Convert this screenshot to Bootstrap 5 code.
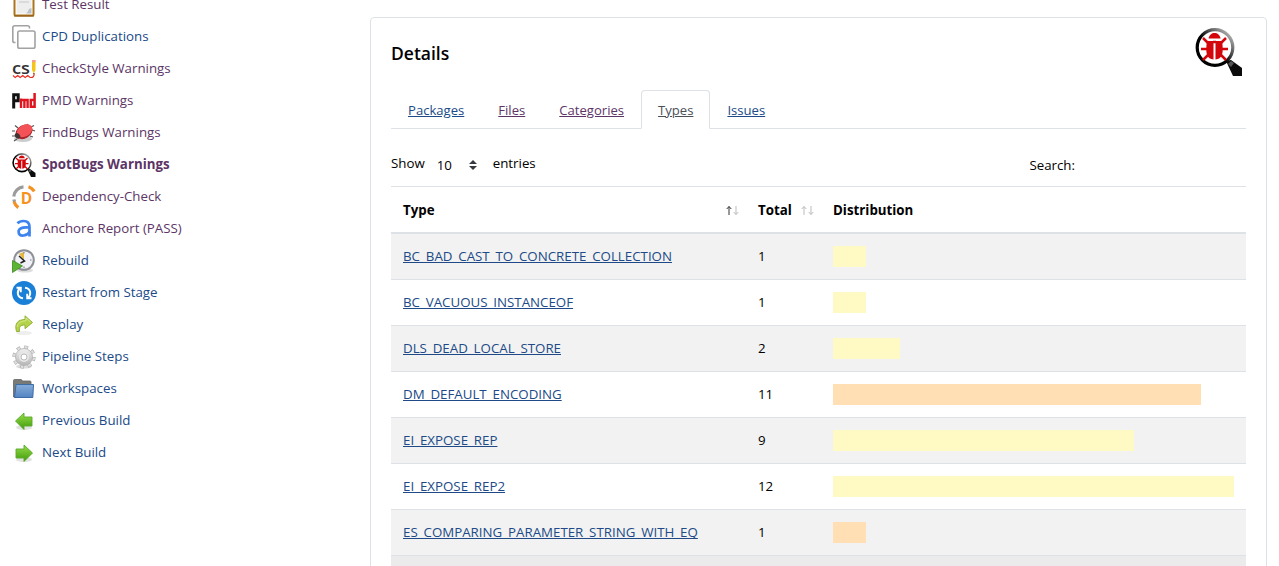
<!DOCTYPE html>
<html lang="en">
<head>
<meta charset="utf-8">
<meta name="viewport" content="width=device-width, initial-scale=1">
<title>SpotBugs Warnings</title>
<link href="https://cdn.jsdelivr.net/npm/bootstrap@5.3.0/dist/css/bootstrap.min.css" rel="stylesheet">
<style>
  body { font-family: "Open Sans", "Noto Sans", sans-serif; font-size: 13.3px; line-height: 21px; color: #000; overflow: hidden; }
  a { color: #204a87; }
  a.seen { color: #5c3566; }
  .page { height: 566px; overflow: hidden; }
  .tasks { width: 370px; margin-top: -12px; padding-left: 12px; }
  .tasks a { height: 32px; gap: 6px; text-decoration: none; }
  .tasks svg { width: 24px; height: 24px; position: relative; top: 1px; overflow: visible; flex: none; }
  .details { width: 897px; height: 700px; margin-top: 17px; padding: 0 20px; border: 1px solid #dee2e6; border-radius: 4px; background: #fff; }
  .details-head { height: 72px; }
  .details-head h5 { font-size: 17.500px; font-weight: 600; line-height: 22px; margin-top: 24px; }
  .details-head svg { width: 48px; height: 48px; margin: 10px 3px 0 0; }
  .nav-tabs { --bs-nav-tabs-border-color: #dee2e6; --bs-nav-tabs-border-radius: 4px; font-size: 13.100px; }
  .nav-tabs .nav-link { height: 39px; padding: 9px 16px 7px; text-decoration: underline; color: #204a87; }
  .nav-tabs .nav-link.seen { color: #5c3566; }
  .nav-tabs .nav-link.active { color: #495057; }
  .tools { height: 57px; padding-top: 12px; }
  .size-pick { width: 60px; padding-left: 12px; padding-top: 3px; }
  .search-label { margin-right: 171px; padding-top: 3px; }
  .types { table-layout: fixed; --bs-table-color: #000; --bs-table-striped-color: #000; --bs-table-striped-bg: #f2f2f2; --bs-table-active-bg: #ebebeb; --bs-border-color: #dee2e6; border-color: #dee2e6; }
  .types > :not(caption) > * > * { padding: 12px; line-height: 21px; height: 46px; border-bottom: 1px solid #dee2e6; }
  .types > thead > tr > th { border-top: 1px solid #dee2e6; border-bottom: 2px solid #dee2e6; height: 46px; padding-bottom: 11px; }
  .types > thead > tr > th.sorted { padding-right: 7px; }
  .types a { color: #204a87; text-underline-offset: 1px; text-decoration-skip-ink: none; }
  .sort-mark { width: 13px; height: 11px; }
  .meter { height: 21px; }
  .fill-low { background: #fff9c4; }
  .fill-normal { background: #ffdfb3; }
</style>
</head>
<body>
<svg class="position-absolute" width="0" height="0">
  <defs>
    <linearGradient id="rim" x1="0" y1="1" x2="1" y2="0"><stop offset=".45" stop-color="#000"/><stop offset="1" stop-color="#d8d8d8"/></linearGradient>
    <linearGradient id="grn" x1="0" y1="0" x2="0" y2="1"><stop offset="0" stop-color="#98de47"/><stop offset="1" stop-color="#3f9a0c"/></linearGradient>
    <linearGradient id="silver" x1="0" y1="0" x2="0" y2="1"><stop offset="0" stop-color="#f2f2f2"/><stop offset="1" stop-color="#b5b5b5"/></linearGradient>
    <linearGradient id="sky" x1="0" y1="0" x2="0" y2="1"><stop offset="0" stop-color="#86addb"/><stop offset="1" stop-color="#5484c0"/></linearGradient>
    <symbol id="spot" viewBox="0 0 48 48">
      <path d="M31 33l5-1 11 8v8h-9z" fill="#0b0b0b"/><path d="M33 36l3-3 3 2-3 4z" fill="#555"/>
      <circle cx="20" cy="19.500" r="17.800" fill="#fff" stroke="url(#rim)" stroke-width="3.200"/>
      <path d="M13.600 10.500c1-7.500 11-7.500 12 0zM12 13h6.500v18.500C12 31 10 26 12 13zM20.500 13H27c2 13 0 18-6.500 18.500z" fill="#d3070b"/>
      <path d="M13 15l-5-5m18 5l5-5M12 21H6m21 0h6M13 27l-5 5m18-5l5 5M18 14h3" fill="none" stroke="#d3070b" stroke-width="2.500"/>
    </symbol>
  </defs>
</svg>

<div class="page d-flex align-items-start">
  <nav class="tasks d-flex flex-column">
    <a href="#" class="seen d-flex align-items-center">
      <svg viewBox="0 0 24 24"><rect x="2.500" y="0" width="19" height="22.500" rx="1" fill="#fff" stroke="#ad741e" stroke-width="2"/><path d="M4.500 2h15v18.500h-15z" fill="#eee"/><path d="M7 6h10M7 9h10" stroke="#c6c6c6"/><path d="M19.500 15v5.500H13c4 0 2-5 6.500-5.500z" fill="#bcc0c7"/><path d="M2 23h20" stroke="#8a5715"/></svg>
      <span>Test Result</span></a>
    <a href="#" class="d-flex align-items-center">
      <svg viewBox="0 0 24 24" fill="none" stroke="#a2a2a2" stroke-width="1.600"><path d="M3.500 17.500H2.600a1.800 1.800 0 0 1-1.800-1.800V2.600A1.800 1.800 0 0 1 2.600.8h13.100a1.800 1.800 0 0 1 1.800 1.800v1"/><rect x="5.800" y="6" width="17.200" height="17.200" rx="1.800"/></svg>
      <span>CPD Duplications</span></a>
    <a href="#" class="seen d-flex align-items-center">
      <svg viewBox="0 0 24 24"><text x="0" y="16.500" font-size="16.500" font-weight="600" fill="#333" textLength="18" lengthAdjust="spacingAndGlyphs">cs</text><path d="M20 3.500h3.500v9.500L21.800 16.500 20 13z" fill="#f3c515"/><path d="M20 3h3.500v2.200H20z" fill="#f49b92"/><path d="M21 16l1.700 0-.8 1.800z" fill="#75421d"/><path d="M1 18.500l2.200 2 2.500-2 2.500 2 2.500-2 2.500 2 2.500-2 2.500 2q4 .5 4-4" fill="none" stroke="#e52d20" stroke-width="1.100"/></svg>
      <span>CheckStyle Warnings</span></a>
    <a href="#" class="seen d-flex align-items-center">
      <svg viewBox="0 0 24 24" fill="none" stroke-width="3"><path d="M1.700 19.500V5.800h4.500v6H3" stroke="#111"/><path d="M9 19V9.500M9 11h3.400v8M12.400 11h3.200v8" stroke="#df1620" stroke-width="2.400"/><path d="M22.600 4v15m-.5-1.300h-3.300V11h3.300" stroke="#df1620" stroke-width="2.500"/></svg>
      <span>PMD Warnings</span></a>
    <a href="#" class="seen d-flex align-items-center">
      <svg viewBox="0 0 24 24"><ellipse cx="11" cy="17.500" rx="9" ry="3.500" fill="#ccc"/><path d="M6 7L3 4.500M3 10H0m4 5H0m5 3l-3 2m17-14l3-1.500M20 9l3 1M18 15l3 1M15 5l1-2" stroke="#555" stroke-width="1.200"/><ellipse cx="12" cy="10.800" rx="9" ry="6.700" transform="rotate(-30 12 10.800)" fill="#a92228"/><ellipse cx="12.600" cy="9.700" rx="8.300" ry="5.800" transform="rotate(-30 12.600 9.700)" fill="#f35356"/><ellipse cx="5.500" cy="14.800" rx="3" ry="2.300" transform="rotate(45 5.500 14.800)" fill="#433"/></svg>
      <span>FindBugs Warnings</span></a>
    <a href="#" class="seen d-flex align-items-center fw-bold">
      <svg><use href="#spot"/></svg>
      <span>SpotBugs Warnings</span></a>
    <a href="#" class="seen d-flex align-items-center">
      <svg viewBox="0 0 24 24"><g fill="none" stroke-width="3.200"><path d="M1.800 11.500A10.500 10.500 0 0 1 11.500 1.900M1.900 14.500a10 10 0 0 0 .8 2.500" stroke="#9b9b9b"/><path d="M16.500 1.800q3.500 1.200 5.800 4.500M2 16.800q1.200 3.500 4.300 5.800" stroke="#f39223"/></g><text x="8.800" y="19" font-size="15.500" font-weight="700" fill="#f6921e">D</text></svg>
      <span>Dependency-Check</span></a>
    <a href="#" class="seen d-flex align-items-center">
      <svg viewBox="0 0 24 24" fill="none" stroke="#3d84f0" stroke-width="2.700"><path d="M5.500 6.300q2-2.300 6-2.300 6 0 6 6v9.500"/><path d="M17.500 10.500q-10-1-10.900 3.500-.3 5 5 4.500 5-1 5.900-4"/></svg>
      <span>Anchore Report (PASS)</span></a>
    <a href="#" class="d-flex align-items-center">
      <svg viewBox="0 0 24 24"><ellipse cx="13" cy="21.500" rx="8" ry="2" fill="#ddd"/><circle cx="12" cy="11" r="9.800" fill="#f1f2f7" stroke="#8d8f96" stroke-width="2"/><path d="M12 11L7 5q3-2 5-1.800z" fill="#e7b83e"/><path d="M7 7l5.500 5-4 2" fill="none" stroke="#222" stroke-width="1.500"/><path d="M12 3v1.500M19.500 11H18M12 19v-1.500" stroke="#777"/><path d="M.5 11.500L10.500 17 .5 23.500z" fill="#5cb534" stroke="#3c8a1c" stroke-width=".8"/></svg>
      <span>Rebuild</span></a>
    <a href="#" class="d-flex align-items-center">
      <svg viewBox="0 0 24 24"><circle cx="12" cy="12" r="12" fill="#1a7fd6"/><g fill="none" stroke="#fff" stroke-width="1.900"><path d="M11 17.200C5 16.500 4.500 10.500 7.800 7.300M4.500 6.800h4.300v4.500M13 6.800c6 .7 6.500 6.700 3.200 9.900M19.500 17.200h-4.300v-4.500"/></g></svg>
      <span>Restart from Stage</span></a>
    <a href="#" class="d-flex align-items-center">
      <svg viewBox="0 0 24 24"><ellipse cx="12" cy="20" rx="8" ry="2" fill="#eee"/><path d="M4.500 18.500C2 10 6.500 6.500 13 6.500V2.800l7.500 6.700-7.500 6.200V12C8 12 7 14 7.500 18.500z" fill="#b4d24a" stroke="#8cad2e" stroke-width=".9"/><path d="M5 14q1-6 9-6.300V5l4.500 4" fill="none" stroke="#d6e98b"/></svg>
      <span>Replay</span></a>
    <a href="#" class="d-flex align-items-center">
      <svg viewBox="0 0 24 24"><ellipse cx="12" cy="21.500" rx="8" ry="2" fill="#ddd"/><circle cx="12" cy="12" r="9.700" fill="none" stroke="#aaa" stroke-width="3.800" stroke-dasharray="3.700 3.918"/><circle cx="12" cy="12" r="9.700" fill="none" stroke="#dedede" stroke-width="2.800" stroke-dasharray="2.700 4.918" stroke-dashoffset="-.5"/><circle cx="12" cy="12" r="8.500" fill="url(#silver)" stroke="#b0b0b0" stroke-width=".8"/><circle cx="12" cy="12" r="5" fill="#e8e8e8"/><circle cx="12" cy="12" r="3" fill="#fff" stroke="#aaa" stroke-width=".8"/></svg>
      <span>Pipeline Steps</span></a>
    <a href="#" class="d-flex align-items-center">
      <svg viewBox="0 0 24 24"><path d="M1.500 20V3.500q0-1 1-1h6.500q1 0 1.300 1.500H18q1 0 1 1V20z" fill="#777a77" stroke="#626562" stroke-width=".8"/><path d="M4 7.500h17.500L20.800 20.500H2.500z" fill="url(#sky)" stroke="#3d6ba5"/></svg>
      <span>Workspaces</span></a>
    <a href="#" class="d-flex align-items-center">
      <svg viewBox="0 0 24 24"><ellipse cx="12" cy="18.500" rx="8" ry="2.500" fill="#e2e2e2"/><path d="M3.500 12l8.500-8v4h8v9h-8v3.500z" fill="url(#grn)" stroke="#5aa82d" stroke-width=".9"/></svg>
      <span>Previous Build</span></a>
    <a href="#" class="d-flex align-items-center">
      <svg viewBox="0 0 24 24"><ellipse cx="12" cy="18.500" rx="8" ry="2.500" fill="#e2e2e2"/><path d="M20.500 12L12 4v4H4v9h8v3.500z" fill="url(#grn)" stroke="#5aa82d" stroke-width=".9"/></svg>
      <span>Next Build</span></a>
  </nav>

  <main class="details flex-shrink-0">
    <div class="details-head d-flex justify-content-between align-items-start">
      <h5>Details</h5>
      <svg><use href="#spot"/></svg>
    </div>
    <ul class="nav nav-tabs">
      <li class="nav-item"><a class="nav-link" href="#">Packages</a></li>
      <li class="nav-item"><a class="nav-link seen" href="#">Files</a></li>
      <li class="nav-item"><a class="nav-link seen" href="#">Categories</a></li>
      <li class="nav-item"><a class="nav-link active" href="#">Types</a></li>
      <li class="nav-item"><a class="nav-link" href="#">Issues</a></li>
    </ul>
    <div class="tools d-flex align-items-center">
      <span>Show</span>
      <span class="size-pick d-flex align-items-center justify-content-between pe-2">10
        <svg width="8" height="10" viewBox="0 0 8 10" fill="#343a40"><path d="M0 4l4-4 4 4zM0 6l4 4 4-4z"/></svg></span>
      <span class="ps-2">entries</span>
      <span class="search-label ms-auto">Search:</span>
    </div>
    <table class="table table-striped types mb-0">
      <colgroup><col style="width:355px"><col style="width:75px"><col></colgroup>
      <thead>
        <tr>
          <th class="sorted"><div class="d-flex justify-content-between align-items-center">Type
            <svg class="sort-mark" viewBox="0 0 13 11" fill="none"><path d="M3 10V1.500M.7 4L3 1.500 5.300 4" stroke="#333"/><path d="M10 1v8.500M7.700 7L10 9.500 12.300 7" stroke="#bbb"/></svg></div></th>
          <th class="sorted"><div class="d-flex justify-content-between align-items-center">Total
            <svg class="sort-mark" viewBox="0 0 13 11" fill="none" stroke="#bbb"><path d="M3 10V1.500M.7 4L3 1.500 5.300 4M10 1v8.500M7.700 7L10 9.500 12.300 7"/></svg></div></th>
          <th>Distribution</th>
        </tr>
      </thead>
      <tbody>
        <tr><td><a href="#">BC_BAD_CAST_TO_CONCRETE_COLLECTION</a></td><td>1</td><td><div class="meter fill-low" style="width:8.33%"></div></td></tr>
        <tr><td><a href="#">BC_VACUOUS_INSTANCEOF</a></td><td>1</td><td><div class="meter fill-low" style="width:8.33%"></div></td></tr>
        <tr><td><a href="#">DLS_DEAD_LOCAL_STORE</a></td><td>2</td><td><div class="meter fill-low" style="width:16.67%"></div></td></tr>
        <tr><td><a href="#">DM_DEFAULT_ENCODING</a></td><td>11</td><td><div class="meter fill-normal" style="width:91.67%"></div></td></tr>
        <tr><td><a href="#">EI_EXPOSE_REP</a></td><td>9</td><td><div class="meter fill-low" style="width:75%"></div></td></tr>
        <tr><td><a href="#">EI_EXPOSE_REP2</a></td><td>12</td><td><div class="meter fill-low" style="width:100%"></div></td></tr>
        <tr><td><a href="#">ES_COMPARING_PARAMETER_STRING_WITH_EQ</a></td><td>1</td><td><div class="meter fill-normal" style="width:8.33%"></div></td></tr>
        <tr class="table-active"><td></td><td></td><td></td></tr>
      </tbody>
    </table>
  </main>
</div>
<script src="https://cdn.jsdelivr.net/npm/bootstrap@5.3.0/dist/js/bootstrap.bundle.min.js"></script>
</body>
</html>
